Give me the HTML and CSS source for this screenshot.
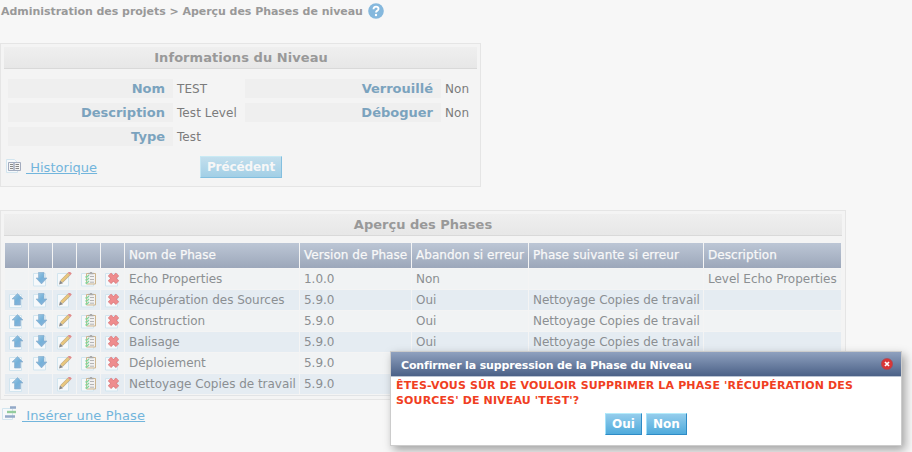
FILE: index.html
```html
<!DOCTYPE html>
<html lang="fr">
<head>
<meta charset="utf-8">
<title>Aperçu des Phases de niveau</title>
<link rel="stylesheet" href="styles.css">
</head>
<body>
<svg class="defs" width="0" height="0">
  <defs>
    <linearGradient id="blue" x1="0" y1="0" x2="1" y2="1"><stop offset="0" stop-color="#a3cbe5"/><stop offset=".5" stop-color="#75b1d9"/><stop offset="1" stop-color="#8fb2d8"/></linearGradient>
    <symbol id="up" viewBox="0 0 16 16"><path class="box" d="M.5 1.500h12v13H.5z"/><path d="M8.500 0.500L14 6H11.500V12H5.500V6H3z" fill="url(#blue)" stroke="#8badcb" stroke-width=".6"/></symbol>
    <symbol id="down" viewBox="0 0 16 16"><path class="box" d="M.5 1.500h12v12.500H.5z"/><path d="M5.500 0.300H11V6H14L8.500 11.900L3 6H5.500z" fill="url(#blue)" stroke="#8badcb" stroke-width=".6"/></symbol>
    <symbol id="pencil" viewBox="0 0 16 16"><path class="box" d="M.5 1.500h11v12.500H.5z"/><path d="M4.500 9.500L12 2" stroke="#b9a988" stroke-width="3.600"/><path d="M4.500 9.300L11.700 2.100" stroke="#e9c77d" stroke-width="2.400"/><path d="M12 2L13.600 .4" stroke="#e08c8c" stroke-width="3.400"/><path d="M2 12.500L3 8.500L6 11.200z" fill="#888"/></symbol>
    <symbol id="list" viewBox="0 0 16 16"><path class="box" d="M.5 1.500h12v12.500H.5z"/><path d="M5.500 1.500h9v10.500H5.500z" fill="#f1f1f1" stroke="#cdb58d"/><path d="M7.500 1.500h5M9 .5h2" stroke="#aaa" stroke-width="1.600"/><path d="M9 4.500h4M9 7.500h4M9 10.200h4" stroke="#b4b4b4"/><path d="M4.500 4.500l1 1L8 3M4.500 7.500l1 1 2.500-2.500M4.500 10.500l1 1L8 9" fill="none" stroke="#83d69b" stroke-width="1.200"/></symbol>
    <symbol id="del" viewBox="0 0 16 16"><path class="box" d="M.5 1.500h12v12.500H.5z"/><path d="M4.500 2.300L12.500 10.300M12.500 2.300L4.500 10.300" stroke="#d97e80" stroke-width="4.600"/><path d="M4.700 2.500L12.300 10.100M12.300 2.500L4.700 10.100" stroke="#ee8c8e" stroke-width="3.200"/></symbol>
  </defs>
</svg>
<div class="crumbs"><span class="crumb-text">Administration des projets &gt; Aperçu des Phases de niveau</span>
  <svg class="help" viewBox="0 0 16 16"><circle cx="8" cy="8" r="7.800" fill="#85b8dd"/><path d="M5.500 6.200C5.500 2.700 10.700 3 10.500 6C10.400 7.700 8 7.600 8 9.500" fill="none" stroke="#fff" stroke-width="1.900"/><circle cx="8" cy="12" r="1.200" fill="#fff"/></svg>
</div>
<section class="panel info">
  <h2 class="heading"><span>Informations du Niveau</span></h2>
  <div class="fields">
    <div class="label"><span>Nom</span></div><div class="value">TEST</div><div class="label"><span>Verrouillé</span></div><div class="value">Non</div>
    <div class="label"><span>Description</span></div><div class="value">Test Level</div><div class="label"><span>Déboguer</span></div><div class="value">Non</div>
    <div class="label"><span>Type</span></div><div class="value">Test</div>
  </div>
  <div class="actions">
    <a class="link history"><svg class="book" viewBox="0 0 16 16"><path class="box" d="M.5.500h8l3 3v10H.5z"/><path d="M2.500 3.500h5.500v8H2.500zM8 3.500h6.500v8H8z" fill="#f3f3f3" stroke="#a3acbf"/><path d="M4 5.500h3M4 7.500h3M4 9.500h3M9.500 5.500h3.500M9.500 7.500h3.500M9.500 9.500h3.500" stroke="#888"/></svg><span>&nbsp;Historique</span></a>
    <button class="btn faded">Précédent</button>
  </div>
</section>
<section class="panel phases">
  <h2 class="heading"><span>Aperçu des Phases</span></h2>
  <div class="grid head"><div></div><div></div><div></div><div></div><div></div><div>Nom de Phase</div><div>Version de Phase</div><div>Abandon si erreur</div><div>Phase suivante si erreur</div><div>Description</div></div>
  <div class="grid row"><div></div><div><svg><use href="#down"/></svg></div><div><svg><use href="#pencil"/></svg></div><div><svg><use href="#list"/></svg></div><div><svg><use href="#del"/></svg></div><div>Echo Properties</div><div>1.0.0</div><div>Non</div><div></div><div>Level Echo Properties</div></div>
  <div class="grid row alt"><div><svg><use href="#up"/></svg></div><div><svg><use href="#down"/></svg></div><div><svg><use href="#pencil"/></svg></div><div><svg><use href="#list"/></svg></div><div><svg><use href="#del"/></svg></div><div>Récupération des Sources</div><div>5.9.0</div><div>Oui</div><div>Nettoyage Copies de travail</div><div></div></div>
  <div class="grid row"><div><svg><use href="#up"/></svg></div><div><svg><use href="#down"/></svg></div><div><svg><use href="#pencil"/></svg></div><div><svg><use href="#list"/></svg></div><div><svg><use href="#del"/></svg></div><div>Construction</div><div>5.9.0</div><div>Oui</div><div>Nettoyage Copies de travail</div><div></div></div>
  <div class="grid row alt"><div><svg><use href="#up"/></svg></div><div><svg><use href="#down"/></svg></div><div><svg><use href="#pencil"/></svg></div><div><svg><use href="#list"/></svg></div><div><svg><use href="#del"/></svg></div><div>Balisage</div><div>5.9.0</div><div>Oui</div><div>Nettoyage Copies de travail</div><div></div></div>
  <div class="grid row"><div><svg><use href="#up"/></svg></div><div><svg><use href="#down"/></svg></div><div><svg><use href="#pencil"/></svg></div><div><svg><use href="#list"/></svg></div><div><svg><use href="#del"/></svg></div><div>Déploiement</div><div>5.9.0</div><div></div><div></div><div></div></div>
  <div class="grid row alt"><div><svg><use href="#up"/></svg></div><div></div><div><svg><use href="#pencil"/></svg></div><div><svg><use href="#list"/></svg></div><div><svg><use href="#del"/></svg></div><div>Nettoyage Copies de travail</div><div>5.9.0</div><div></div><div></div><div></div></div>
  <div class="rule"></div>
</section>
<a class="link insert"><svg class="ins" viewBox="0 0 16 16"><path class="box" d="M.5 2.500h10v11H.5z"/><path d="M8 1.500h6M3 10.500h10" stroke="#93a9c8" stroke-width="2.400"/><path d="M5 6h9" stroke="#93cc9d" stroke-width="2.400"/></svg><span>&nbsp;Insérer une Phase</span></a>
<div class="dialog">
  <div class="title"><span>Confirmer la suppression de la Phase du Niveau</span><svg class="close" viewBox="0 0 12 12"><circle cx="6" cy="6" r="5.600" fill="#d93636" stroke="#a94652" stroke-width=".6"/><path d="M4 4l4 4M8 4l-4 4" stroke="#fff" stroke-width="1.700"/></svg></div>
  <div class="message">ÊTES-VOUS SÛR DE VOULOIR SUPPRIMER LA PHASE 'RÉCUPÉRATION DES<br>SOURCES' DE NIVEAU 'TEST'?</div>
  <div class="buttons"><button class="btn oui">Oui</button><button class="btn non">Non</button></div>
</div>
</body>
</html>
```
FILE: styles.css
```css
* { box-sizing: border-box; }
body { margin: 0; width: 912px; height: 452px; overflow: hidden; background: #f7f7f7; font-family: "DejaVu Sans", Verdana, sans-serif; color: #7b7b7b; }
.defs { position: absolute; }
.box { fill: #f6f9fb; stroke: #d2e5ef; }
.crumbs { height: 43px; padding: 3px 0 0 1px; display: flex; align-items: flex-start; font-size: 11px; font-weight: bold; line-height: 17px; letter-spacing: -.04px; color: #999; white-space: nowrap; }
.help { width: 16px; height: 16px; margin-left: 5px; }
.panel { border: 1px solid #e5e5e5; background: #f4f4f4; padding: 3px; }
.info { width: 481px; height: 144px; }
.heading { margin: 0; height: 22px; border-bottom: 1px solid #d9d9d9; background: linear-gradient(#efefef, #e7e7e7); text-align: center; font-size: 13px; line-height: 21px; color: #999; }
.info .heading { letter-spacing: .06px; padding-left: 1px; }
.fields { margin: 10px 4px 0; display: grid; grid-template-columns: 165px 72px 196px 32px; row-gap: 5px; }
.label { height: 19px; padding-right: 8px; background: #efefef; text-align: right; font-weight: bold; font-size: 13px; line-height: 19px; color: #7ba3be; }
.value { padding-left: 4px; font-size: 12px; line-height: 20px; height: 19px; color: #7b7b7b; letter-spacing: .08px; white-space: nowrap; }
.actions { display: flex; margin-top: 10px; }
.link { display: flex; color: #72b5dc; font-size: 13px; line-height: 18px; letter-spacing: .03px; }
.link span { text-decoration: underline; white-space: nowrap; }
.history { width: 196px; padding: 3px 0 0 2px; }
.book, .ins { width: 16px; height: 16px; margin-right: 4px; }
.btn { height: 22px; padding: 0; border: 1px solid; border-color: #b5ecfb #2e8bc6 #2e8bc6 #a5e2fa; background: linear-gradient(#94cdec, #4fabdc); color: #fff; font: bold 12px/18px "DejaVu Sans", sans-serif; }
.faded { width: 82px; border-color: #c9eaf4 #83bfdf #83bfdf #c5e6f3; background: linear-gradient(#c3dfed, #a2cfe6); color: #f7f7f7; letter-spacing: -.1px; }
.phases { width: 846px; height: 190px; margin-top: 23px; }
.grid { display: grid; grid-template-columns: repeat(5, 23px) 174px 111px 116px 174px 137px; column-gap: 1px; margin: 0 1px 1px; font-size: 12px; letter-spacing: -.02px; white-space: nowrap; }
.head { margin-top: 7px; color: #f8f8f8; letter-spacing: .04px; }
.head div { height: 25px; padding-left: 4px; line-height: 24px; background: linear-gradient(#bcc6d5, #9ca7ba); -webkit-text-stroke: .25px #f8f8f8; }
.row div { height: 20px; padding-left: 4px; line-height: 20px; background: #f1f3f4; color: #8b8f92; }
.row.alt div { background: #e5ecf2; }
.row svg { display: block; width: 16px; height: 16px; margin-top: 3px; }
.rule { height: 1px; background: #e2e4e6; }
.insert { padding: 7px 0 0 2px; width: 200px; letter-spacing: .12px; }
.ins { margin-top: -1px; }
.dialog { position: absolute; left: 390px; top: 351px; width: 512px; height: 95px; border: 1px solid #ccc; background: #fff; box-shadow: 3px 4px 9px rgba(0,0,0,.35); }
.title { height: 25px; padding: 0 8px 0 10px; display: flex; justify-content: space-between; border-bottom: 1px solid #bac4d3; background: linear-gradient(#8fa1bf, #4b6187); color: #fff; font-weight: bold; font-size: 11px; line-height: 27px; letter-spacing: -.15px; }
.close { width: 12px; height: 12px; margin-top: 6px; }
.message { padding: 1px 0 0 5px; color: #f03e22; font-weight: bold; font-size: 11px; line-height: 15px; letter-spacing: .14px; white-space: nowrap; }
.buttons { display: flex; gap: 4px; margin: 5px 0 0 214px; }
.oui { width: 37px; }
.non { width: 41px; }
```
